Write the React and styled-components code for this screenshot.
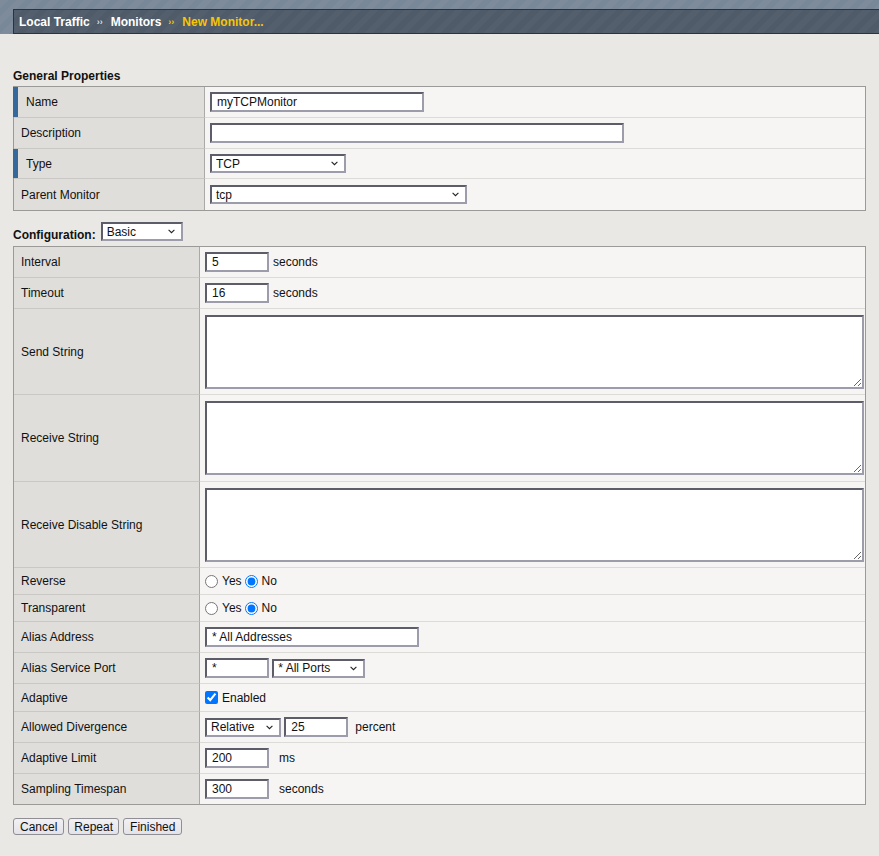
import styled, { createGlobalStyle } from 'styled-components';

const Global = createGlobalStyle`
  html, body {
    margin: 0;
    padding: 0;
    background: #e9e8e4;
  }
  body {
    font-family: "Liberation Sans", Arial, sans-serif;
    font-size: 12px;
    color: #111;
  }
`;

const Band = styled.div`
  height: 34px;
  padding-top: 9px;
  box-sizing: border-box;
  background: repeating-linear-gradient(135deg, #7d8b9b 0 6px, #78879700 6px 12px), #798898;
`;

const Crumbs = styled.nav`
  margin-left: 13px;
  height: 25px;
  box-sizing: border-box;
  border: 1px solid #2e3338;
  border-right: none;
  background: repeating-linear-gradient(135deg, #535f6c 0 6px, #4f5b68 6px 12px);
  display: flex;
  align-items: center;
  padding-left: 5px;
  font-weight: bold;
  font-size: 12px;
  color: #ffffff;
`;

const Sep = styled.span`
  font-size: 9px;
  margin: 0 8px 0 7px;
  color: ${({ $gold }) => ($gold ? '#f5c400' : '#d8dde2')};
`;

const Current = styled.span`
  color: #f7c600;
`;

const Page = styled.main`
  padding: 0 13px 20px 13px;
`;

const Heading = styled.h3`
  margin: 35px 0 3px 0;
  font-size: 12px;
  font-weight: bold;
  line-height: 14px;
`;

const ConfigHead = styled.div`
  display: flex;
  align-items: flex-end;
  gap: 5px;
  margin: 11px 0 5px 0;
  font-weight: bold;
  > span { line-height: 12px; }
`;

const Table = styled.table`
  width: 100%;
  border: 1px solid #9a9a98;
  border-spacing: 0;
  table-layout: fixed;
  background: #f6f5f3;
`;

const Label = styled.td`
  position: relative;
  width: ${({ $w }) => $w}px;
  box-sizing: border-box;
  background: #dfdedb;
  border-right: 1px solid #a9a9a7;
  border-bottom: 1px solid #c9c8c5;
  padding: 0 0 0 ${({ $mark }) => ($mark ? 12 : 7)}px;
  height: ${({ $h }) => $h}px;
  vertical-align: middle;
  &::before {
    content: '';
    display: ${({ $mark }) => ($mark ? 'block' : 'none')};
    position: absolute;
    left: -1px;
    top: 0;
    bottom: 0;
    width: 5px;
    background: #35699b;
  }
  tr:last-child > & { border-bottom: none; }
`;

const Value = styled.td`
  border-bottom: 1px solid #dcdbd8;
  padding: 0 1px 0 5px;
  vertical-align: middle;
  white-space: nowrap;
  tr:last-child > & { border-bottom: none; }
`;

const Field = styled.input`
  box-sizing: border-box;
  width: ${({ $w }) => $w}px;
  height: 20px;
  padding: 1px 5px;
  margin: 0;
  vertical-align: middle;
  border: 2px solid;
  border-color: #5d5d69 #9c9caa #9c9caa #5d5d69;
  background: #fff;
  font: 12px "Liberation Sans", Arial, sans-serif;
  color: #111;
  outline: none;
`;

const SelectBox = styled.span`
  position: relative;
  display: inline-block;
  vertical-align: middle;
  > svg {
    position: absolute;
    right: 8px;
    top: 7px;
    pointer-events: none;
  }
`;

const NativeSelect = styled.select`
  appearance: none;
  display: block;
  box-sizing: border-box;
  width: ${({ $w }) => $w}px;
  height: 19px;
  margin: 0;
  padding: 0 2px 0 4px;
  border: 2px solid;
  border-color: #5d5d69 #9c9caa #9c9caa #5d5d69;
  border-radius: 0;
  background: #fff;
  font: 12px "Liberation Sans", Arial, sans-serif;
  color: #111;
`;

const Select = ({ w, value }) => (
  <SelectBox>
    <NativeSelect $w={w} defaultValue={value}>
      <option value={value}>{value}</option>
    </NativeSelect>
    <svg width="7" height="5" viewBox="0 0 7 5">
      <path d="M0.6 0.8 L3.5 3.7 L6.4 0.8" fill="none" stroke="#222" strokeWidth="1.1" />
    </svg>
  </SelectBox>
);

const Area = styled.textarea`
  display: block;
  box-sizing: border-box;
  width: 100%;
  height: 74px;
  margin: 0;
  border: 2px solid;
  border-color: #5d5d69 #9c9caa #9c9caa #5d5d69;
  background: #fff;
  font: 12px "Liberation Sans", Arial, sans-serif;
`;

const Unit = styled.span`
  margin-left: ${({ $gap }) => $gap}px;
  vertical-align: middle;
`;

const Choice = styled.label`
  display: inline-flex;
  align-items: center;
  margin-right: 3px;
  vertical-align: middle;
  > input { margin: 0 4px 0 0; width: 13px; height: 13px; }
`;

const Buttons = styled.div`
  display: flex;
  gap: 4px;
  margin-top: 13px;
`;

const Button = styled.button`
  height: 17px;
  padding: 0 ${({ $pad }) => $pad}px;
  border: 1px solid #8e8e94;
  border-radius: 3px;
  background: linear-gradient(#f2f2f5, #e2e2e8);
  font: 12px "Liberation Sans", Arial, sans-serif;
  line-height: 14px;
  color: #111;
`;

const general = [
  { label: 'Name', mark: true, h: 31, el: <Field $w={214} defaultValue="myTCPMonitor" /> },
  { label: 'Description', h: 31, el: <Field $w={414} defaultValue="" /> },
  { label: 'Type', mark: true, h: 30, el: <Select w={136} value="TCP" /> },
  { label: 'Parent Monitor', h: 31, el: <Select w={257} value="tcp" /> },
];

const YesNo = ({ name }) => (
  <>
    <Choice><input type="radio" name={name} />Yes</Choice>
    <Choice><input type="radio" name={name} defaultChecked />No</Choice>
  </>
);

const config = [
  { label: 'Interval', h: 31, el: <><Field $w={64} defaultValue="5" /><Unit $gap={4}>seconds</Unit></> },
  { label: 'Timeout', h: 31, el: <><Field $w={64} defaultValue="16" /><Unit $gap={4}>seconds</Unit></> },
  { label: 'Send String', h: 86, el: <Area /> },
  { label: 'Receive String', h: 87, el: <Area /> },
  { label: 'Receive Disable String', h: 86, el: <Area /> },
  { label: 'Reverse', h: 27, el: <YesNo name="reverse" /> },
  { label: 'Transparent', h: 27, el: <YesNo name="transparent" /> },
  { label: 'Alias Address', h: 31, el: <Field $w={214} defaultValue="* All Addresses" /> },
  {
    label: 'Alias Service Port', h: 31,
    el: (
      <>
        <Field $w={64} defaultValue="*" />{' '}
        <Select w={93} value="* All Ports" />
      </>
    ),
  },
  {
    label: 'Adaptive', h: 28,
    el: <Choice><input type="checkbox" defaultChecked />Enabled</Choice>,
  },
  {
    label: 'Allowed Divergence', h: 31,
    el: (
      <>
        <Select w={76} value="Relative" />{' '}
        <Field $w={64} defaultValue="25" />
        <Unit $gap={7}>percent</Unit>
      </>
    ),
  },
  { label: 'Adaptive Limit', h: 31, el: <><Field $w={64} defaultValue="200" /><Unit $gap={10}>ms</Unit></> },
  { label: 'Sampling Timespan', h: 30, el: <><Field $w={64} defaultValue="300" /><Unit $gap={10}>seconds</Unit></> },
];

const Rows = ({ rows, w }) => (
  <tbody>
    {rows.map((r) => (
      <tr key={r.label}>
        <Label $w={w} $h={r.h} $mark={r.mark}>{r.label}</Label>
        <Value>{r.el}</Value>
      </tr>
    ))}
  </tbody>
);

export default function App() {
  return (
    <>
      <Global />
      <Band>
        <Crumbs>
          Local Traffic<Sep>››</Sep>Monitors<Sep $gold>››</Sep><Current>New Monitor...</Current>
        </Crumbs>
      </Band>
      <Page>
        <Heading>General Properties</Heading>
        <Table>
          <Rows rows={general} w={191} />
        </Table>
        <ConfigHead>
          <span>Configuration:</span>
          <Select w={82} value="Basic" />
        </ConfigHead>
        <Table>
          <Rows rows={config} w={186} />
        </Table>
        <Buttons>
          <Button $pad={6}>Cancel</Button>
          <Button $pad={5}>Repeat</Button>
          <Button $pad={6}>Finished</Button>
        </Buttons>
      </Page>
    </>
  );
}
